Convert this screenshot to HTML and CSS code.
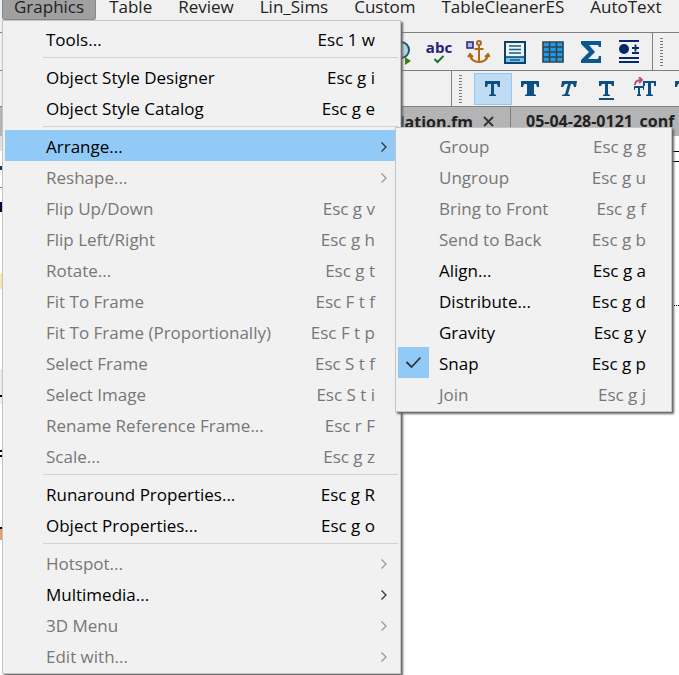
FILE: index.html
```html
<!DOCTYPE html>
<html lang="en">
<head>
  <meta charset="UTF-8">
  <meta name="viewport" content="width=device-width, initial-scale=1.0">
  <title>Graphics menu</title>
  <link rel="stylesheet" href="styles.css">
</head>
<body>
  <!-- shared icons -->
  <svg class="sprite">
    <symbol id="arrow" viewBox="0 0 8 12"><path d="M1.5 1.5 6 6l-4.5 4.5" fill="none" stroke="currentColor" stroke-width="1.3"/></symbol>
    <symbol id="serif-t" viewBox="0 0 24 24"><path d="M5 4h15v6h-2l-1-3h-3v10l2 1v1H9v-1l2-1V7H8l-1 3H5z" fill="#0c4f85"/></symbol>
  </svg>

  <nav class="menubar">
    <button class="menubar-item open">Graphics</button>
    <button class="menubar-item">Table</button>
    <button class="menubar-item">Review</button>
    <button class="menubar-item">Lin_Sims</button>
    <button class="menubar-item">Custom</button>
    <button class="menubar-item">TableCleanerES</button>
    <button class="menubar-item">AutoText</button>
  </nav>

  <div class="toolbar toolbar-main">
    <button class="tool" aria-label="Find"><svg width="28" height="28" viewBox="0 0 28 28"><circle cx="14" cy="12" r="8" fill="#b9d4dc" stroke="#1d5470" stroke-width="2"/><path d="M18 19l6 4-6 4z" fill="#3f7d12"/></svg></button>
    <button class="tool" aria-label="Spelling"><span class="abc">abc</span><svg width="12" height="9" viewBox="0 0 12 9"><path d="M1.5 4 4.5 7 10.5 1" fill="none" stroke="#187434" stroke-width="2"/></svg></button>
    <button class="tool" aria-label="Anchored frame"><svg width="26" height="26" viewBox="0 0 26 26"><path d="M3 3h6v6H3z" fill="#b9b5f5" stroke="#29236f" stroke-width="1.5"/><g fill="none" stroke="#b26a16" stroke-width="2"><circle cx="15" cy="4" r="2"/><path d="M15 6v17M10.5 10h9M6 16c1 5 5 7 9 7s8-2 9-7M4 18l2-3 3 3M21 18l3-3 2 3"/></g></svg></button>
    <button class="tool" aria-label="Text frame"><svg width="22" height="24" viewBox="0 0 22 24"><path d="M1 2h20v21H1z" fill="#eef5f9" stroke="#0e4167" stroke-width="2"/><path d="M2 17h18v5H2z" fill="#6fc5f5"/><path d="M2 17h18" stroke="#0e4167" stroke-width="1.5"/><path d="M5 6h12M5 9.5h12M5 13h12M6 20h10" stroke="#1d5c86" stroke-width="1.5"/></svg></button>
    <button class="tool" aria-label="Insert table"><svg width="22" height="22" viewBox="0 0 22 22"><path d="M1 1h20v20H1z" fill="#1d9be8"/><path d="M1 1h20v20H1zM7.5 1v20M14.5 1v20M1 6h20M1 11h20M1 16h20" fill="none" stroke="#31434c" stroke-width="1.6"/></svg></button>
    <button class="tool" aria-label="Equations"><svg width="22" height="24" viewBox="0 0 22 24"><path d="M1 1h20v6h-2l-1-2H9l6 7-7 7h10l1-3h2v7H1v-3l8-8-8-8z" fill="#0b578f"/></svg></button>
    <button class="tool" aria-label="Paragraph"><svg width="22" height="24" viewBox="0 0 22 24"><circle cx="6" cy="9" r="5" fill="#07286b"/><path d="M1 1h20M1 18h20M1 22h20M14 13h7M14 8h7M17.5 4.5v7" stroke="#07286b" stroke-width="1.8"/></svg></button>
    <span class="divider"></span>
    <span class="grip"></span>
  </div>

  <div class="toolbar toolbar-text">
    <span class="divider"></span>
    <span class="grip"></span>
    <button class="tool active" aria-label="Plain"><svg width="24" height="24"><use href="#serif-t"/></svg></button>
    <button class="tool" aria-label="Bold"><svg width="24" height="24" viewBox="0 0 24 24"><path d="M3 4h18v6h-2l-1-3h-2v10l2 1v1H7v-1l2-1V7H6l-1 3H3z" fill="#0c4f85"/></svg></button>
    <button class="tool" aria-label="Italic"><svg width="24" height="24" viewBox="0 0 24 24"><path d="M6 4h15l-1 6h-2l-1-3h-2l-3 10 2 1v1H6v-1l3-1 3-10H9l-2 3H5z" fill="#0c4f85"/></svg></button>
    <button class="tool" aria-label="Underline"><svg width="24" height="24" viewBox="0 0 24 24"><path d="M5 4h15v5h-2l-1-2h-3v10l2 1v1H9v-1l2-1V7H8L7 9H5zM5 21h15v2H5z" fill="#0c4f85"/></svg></button>
    <button class="tool" aria-label="Change case"><svg width="24" height="24" viewBox="0 0 24 24"><path d="M11 4h13v5h-2V6h-3v11l2 1v1h-7v-1l2-1V6h-3v3h-2zM2 9h10v4h-1v-2H8v6l1 1v1H5v-1l1-1v-6H3v2H2z" fill="#0c4f85"/><path d="M3 8c0-4 3-5 6-5M7 0l3 3-3 3" fill="none" stroke="#b85078" stroke-width="2"/></svg></button>
    <button class="tool" aria-label="Superscript"><svg width="24" height="24"><use href="#serif-t"/></svg></button>
  </div>

  <div class="tabs">
    <div class="tab tab-first"><span>llation.fm</span><button class="close" aria-label="Close"><svg width="11" height="11" viewBox="0 0 11 11"><path d="M1 1l9 9M10 1l-9 9" stroke="#333" stroke-width="1.8"/></svg></button></div>
    <div class="tab">05-04-28-0121_conf</div>
  </div>

  <main class="document">
    <div class="page-edge"></div>
    <div class="page">
      <div class="ruler"></div>
      <div class="guide"></div>
    </div>
  </main>

  <div class="menu graphics-menu">
    <button class="item"><span>Tools...</span><span class="key">Esc 1 w</span></button>
    <hr>
    <button class="item"><span>Object Style Designer</span><span class="key">Esc g i</span></button>
    <button class="item"><span>Object Style Catalog</span><span class="key">Esc g e</span></button>
    <hr>
    <button class="item selected"><span>Arrange...</span><svg class="arrow"><use href="#arrow"/></svg></button>
    <button class="item" disabled><span>Reshape...</span><svg class="arrow"><use href="#arrow"/></svg></button>
    <button class="item" disabled><span>Flip Up/Down</span><span class="key">Esc g v</span></button>
    <button class="item" disabled><span>Flip Left/Right</span><span class="key">Esc g h</span></button>
    <button class="item" disabled><span>Rotate...</span><span class="key">Esc g t</span></button>
    <button class="item" disabled><span>Fit To Frame</span><span class="key">Esc F t f</span></button>
    <button class="item" disabled><span>Fit To Frame (Proportionally)</span><span class="key">Esc F t p</span></button>
    <button class="item" disabled><span>Select Frame</span><span class="key">Esc S t f</span></button>
    <button class="item" disabled><span>Select Image</span><span class="key">Esc S t i</span></button>
    <button class="item" disabled><span>Rename Reference Frame...</span><span class="key">Esc r F</span></button>
    <button class="item" disabled><span>Scale...</span><span class="key">Esc g z</span></button>
    <hr>
    <button class="item"><span>Runaround Properties...</span><span class="key">Esc g R</span></button>
    <button class="item"><span>Object Properties...</span><span class="key">Esc g o</span></button>
    <hr>
    <button class="item" disabled><span>Hotspot...</span><svg class="arrow"><use href="#arrow"/></svg></button>
    <button class="item"><span>Multimedia...</span><svg class="arrow"><use href="#arrow"/></svg></button>
    <button class="item" disabled><span>3D Menu</span><svg class="arrow"><use href="#arrow"/></svg></button>
    <button class="item" disabled><span>Edit with...</span><svg class="arrow"><use href="#arrow"/></svg></button>
  </div>

  <div class="menu arrange-menu">
    <button class="item" disabled><span>Group</span><span class="key">Esc g g</span></button>
    <button class="item" disabled><span>Ungroup</span><span class="key">Esc g u</span></button>
    <button class="item" disabled><span>Bring to Front</span><span class="key">Esc g f</span></button>
    <button class="item" disabled><span>Send to Back</span><span class="key">Esc g b</span></button>
    <button class="item"><span>Align...</span><span class="key">Esc g a</span></button>
    <button class="item"><span>Distribute...</span><span class="key">Esc g d</span></button>
    <button class="item"><span>Gravity</span><span class="key">Esc g y</span></button>
    <button class="item"><span class="check"><svg width="17" height="13" viewBox="0 0 17 13"><path d="M1.5 6l5 5 9-9.5" fill="none" stroke="#333" stroke-width="1.8"/></svg></span><span>Snap</span><span class="key">Esc g p</span></button>
    <button class="item" disabled><span>Join</span><span class="key">Esc g j</span></button>
  </div>
</body>
</html>
```

FILE: styles.css
```css
* {
  box-sizing: border-box;
}
body {
  margin: 0;
  height: 100vh;
  display: flex;
  flex-direction: column;
  position: relative;
  overflow: hidden;
  background: #f0f0f0;
  font-family: "Open Sans", "Noto Sans", sans-serif;
  font-size: 17px;
  color: #000;
}
button {
  margin: 0;
  padding: 0;
  border: 0;
  background: none;
  font: inherit;
  color: inherit;
}
.sprite {
  display: none;
}

/* menu bar */
.menubar {
  display: flex;
  flex: none;
  height: 32px;
  padding-left: 2px;
  align-items: flex-start;
}
.menubar-item {
  flex: none;
  height: 20px;
  padding: 0 13px 6px;
  line-height: 14px;
  color: #222;
}
.menubar-item.open {
  background: #a0a0a0;
  border: 1px solid #888;
  border-top: 0;
  border-radius: 0 0 3px 3px;
  padding: 0 11px 5px;
}

/* toolbars */
.toolbar {
  display: flex;
  flex: none;
  align-items: center;
  border-top: 1px solid #808080;
}
.toolbar-main {
  height: 38px;
  padding-left: 382px;
}
.toolbar-text {
  height: 36px;
  padding-left: 451px;
}
.tool {
  flex: none;
  width: 38px;
  height: 32px;
  display: flex;
  flex-direction: column;
  align-items: center;
  justify-content: center;
}
.toolbar-text .tool {
  padding: 0 3px 0 0;
}
.tool.active {
  background: #bfdcf3;
  border: 1px solid #90c8f6;
}
.abc {
  font-weight: bold;
  font-size: 15px;
  line-height: 15px;
  color: #29236f;
}
.divider {
  flex: none;
  align-self: stretch;
  width: 1px;
  background: #808080;
}
.toolbar-main .divider {
  margin-left: 4px;
}
.grip {
  flex: none;
  width: 3px;
  height: 28px;
  margin: 0 12px 0 7px;
  background: repeating-linear-gradient(#777 0 1px, transparent 1px 3px);
}

/* document tabs */
.tabs {
  display: flex;
  flex: none;
  height: 30px;
  background: #b4b4b4;
  border-top: 1px solid #808080;
  font-size: 16px;
  font-weight: bold;
  line-height: 28px;
  color: #222;
}
.tab {
  flex: none;
  padding-left: 15px;
}
.tab-first {
  display: flex;
  justify-content: flex-end;
  align-items: center;
  gap: 10px;
  width: 511px;
  padding-right: 16px;
  border-right: 1px solid #808080;
}
.close {
  display: flex;
}

/* page behind the menus */
.document {
  flex: 1;
  display: flex;
  background: #fff;
}
.page-edge {
  width: 2px;
  background: linear-gradient(
    #e0e0e0 0 15px, #fff 15px 30px,
    #0a3a6b 30px 34px, #fff 34px 51px,
    #808080 51px 52px, #fff 52px 66px,
    #001030 66px 76px, #fff 76px 138px,
    #f3e9ae 138px 153px, #fff 153px 233px,
    #ececec 233px 259px, #000 259px 261px, #ececec 261px 268px, #fff 268px 314px,
    #000 314px 316px, #fff 316px 319px, #000 319px 321px, #fff 321px 391px,
    #000 391px 393px, #e0a070 393px 404px, #fff 404px);
}
.page {
  flex: 1;
  padding: 15px 0 0 400px;
}
.ruler {
  height: 11px;
  border-top: 1px solid #000;
  border-bottom: 1px solid #000;
}
.guide {
  height: 144px;
  border-bottom: 1px dotted #000;
}

/* drop-down menus */
.menu {
  position: absolute;
  padding: 2px;
  background: #f1f1f1;
  border: 1px solid #c4c4c4;
  box-shadow: 2px 2px 2px #666;
}
.graphics-menu {
  left: 2px;
  top: 20px;
  width: 399px;
}
.arrange-menu {
  left: 395px;
  top: 127px;
  width: 277px;
}
.menu hr {
  margin: 3px 0 3px 38px;
  border: 0;
  height: 1px;
  background: #d2d2d2;
}
.item {
  display: flex;
  align-items: center;
  position: relative;
  width: 100%;
  height: 31px;
  padding: 2px 23px 0 41px;
  line-height: 29px;
  white-space: nowrap;
}
.graphics-menu .item {
  width: 390px;
  padding-right: 20px;
}
.item:disabled {
  color: #777;
}
.selected {
  background: #91c9f7;
}
.key {
  margin-left: auto;
}
.arrow {
  position: absolute;
  right: 7px;
  width: 8px;
  height: 12px;
  color: #333;
}
.item:disabled .arrow {
  color: #999;
}
.check {
  position: absolute;
  left: 0;
  top: 0;
  display: flex;
  align-items: center;
  justify-content: center;
  width: 31px;
  height: 31px;
  background: #91c9f7;
}
```
